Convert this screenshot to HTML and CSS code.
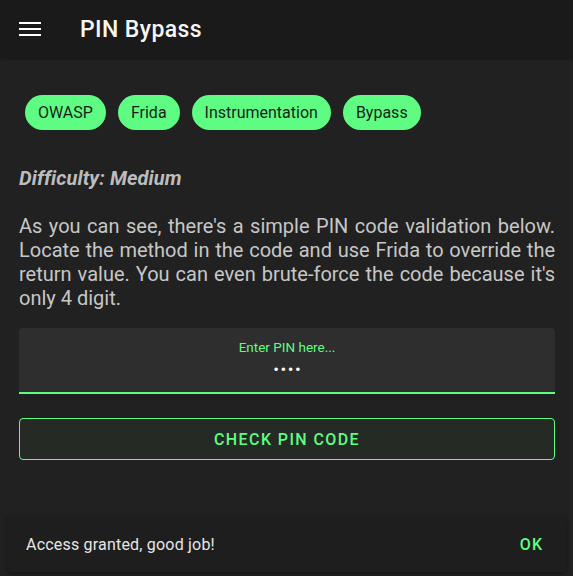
FILE: index.html
```html
<!DOCTYPE html>
<html>
<head>
<meta charset="utf-8">
<link rel="stylesheet" href="styles.css">
</head>
<body>
<header class="appbar">
  <svg class="menu" width="22" height="16" viewBox="0 0 22 16"><rect x="0" y="0" width="22" height="2" fill="#ffffff"/><rect x="0" y="6" width="22" height="2" fill="#ffffff"/><rect x="0" y="12" width="22" height="2" fill="#ffffff"/></svg>
  <h1 class="title">PIN Bypass</h1>
</header>
<main class="content">
  <div class="chips">
    <span class="chip">OWASP</span>
    <span class="chip">Frida</span>
    <span class="chip">Instrumentation</span>
    <span class="chip">Bypass</span>
  </div>
  <p class="difficulty">Difficulty: Medium</p>
  <p class="desc">As you can see, there's a simple PIN code validation below. Locate the method in the code and use Frida to override the return value. You can even brute-force the code because it's only 4 digit.</p>
  <div class="field">
    <span class="label">Enter PIN here...</span>
    <span class="value">••••</span>
  </div>
  <button class="check">CHECK PIN CODE</button>
</main>
<div class="snackbar">
  <span class="snack-text">Access granted, good job!</span>
  <span class="snack-action">OK</span>
</div>
</body>
</html>
```
FILE: styles.css
```css
* { box-sizing: border-box; }
html, body { margin: 0; padding: 0; }
body {
  width: 573px;
  height: 576px;
  background: #212121;
  font-family: Roboto, "Noto Sans", sans-serif;
  position: relative;
  overflow: hidden;
}
.appbar {
  height: 58px;
  background: #1a1a1a;
  display: flex;
  align-items: center;
  padding-left: 19px;
  box-shadow: 0 1px 3px rgba(0,0,0,0.3);
}
.menu { display: block; margin-top: 2px; }
.title {
  margin: 0 0 0 39px;
  color: #f5f5f5;
  font-size: 23px;
  font-weight: 500;
  letter-spacing: 0.4px;
}
.content {
  padding: 37px 18px 0 19px;
}
.chips {
  display: flex;
  gap: 12px;
  padding-left: 6px;
}
.chip {
  height: 35px;
  border-radius: 18px;
  background: #5efc82;
  color: #1b1f1c;
  font-size: 16px;
  display: flex;
  align-items: center;
  padding: 0 13px;
}
.difficulty {
  margin: 36px 0 0 0;
  color: #bdbdbd;
  font-size: 20px;
  font-weight: 700;
  font-style: italic;
  line-height: 24px;
  letter-spacing: 0.1px;
}
.desc {
  margin: 24px 0 0 0;
  color: #c7c7c7;
  font-size: 20px;
  line-height: 24px;
  text-align: justify;
}
.field {
  margin-top: 18px;
  height: 66px;
  background: #2e2e2e;
  border-radius: 4px 4px 0 0;
  border-bottom: 2px solid #5efc82;
  display: flex;
  flex-direction: column;
  align-items: center;
  padding-top: 10px;
}
.label {
  color: #5efc82;
  font-size: 13.5px;
  line-height: 18px;
}
.value {
  color: #ffffff;
  font-size: 17px;
  line-height: 20px;
  margin-top: 3px;
  letter-spacing: 1.5px;
  padding-left: 1.5px;
}
.check {
  display: block;
  width: 100%;
  margin-top: 24px;
  height: 42px;
  background: #252a25;
  border: 1px solid #5efc82;
  border-radius: 4px;
  color: #5efc82;
  font-family: Roboto, sans-serif;
  font-size: 16px;
  font-weight: 500;
  letter-spacing: 1.4px;
}
.snackbar {
  position: absolute;
  left: 7px;
  right: 7px;
  top: 516px;
  height: 56px;
  background: #1e1e1e;
  border-radius: 4px;
  box-shadow: 0 2px 4px rgba(0,0,0,0.4);
  display: flex;
  align-items: center;
  justify-content: space-between;
  padding: 0 23px 0 19px;
}
.snack-text {
  color: #e6e6e6;
  font-size: 16px;
  letter-spacing: 0.2px;
}
.snack-action {
  color: #5efc82;
  font-size: 16px;
  font-weight: 500;
  letter-spacing: 1px;
}
```
